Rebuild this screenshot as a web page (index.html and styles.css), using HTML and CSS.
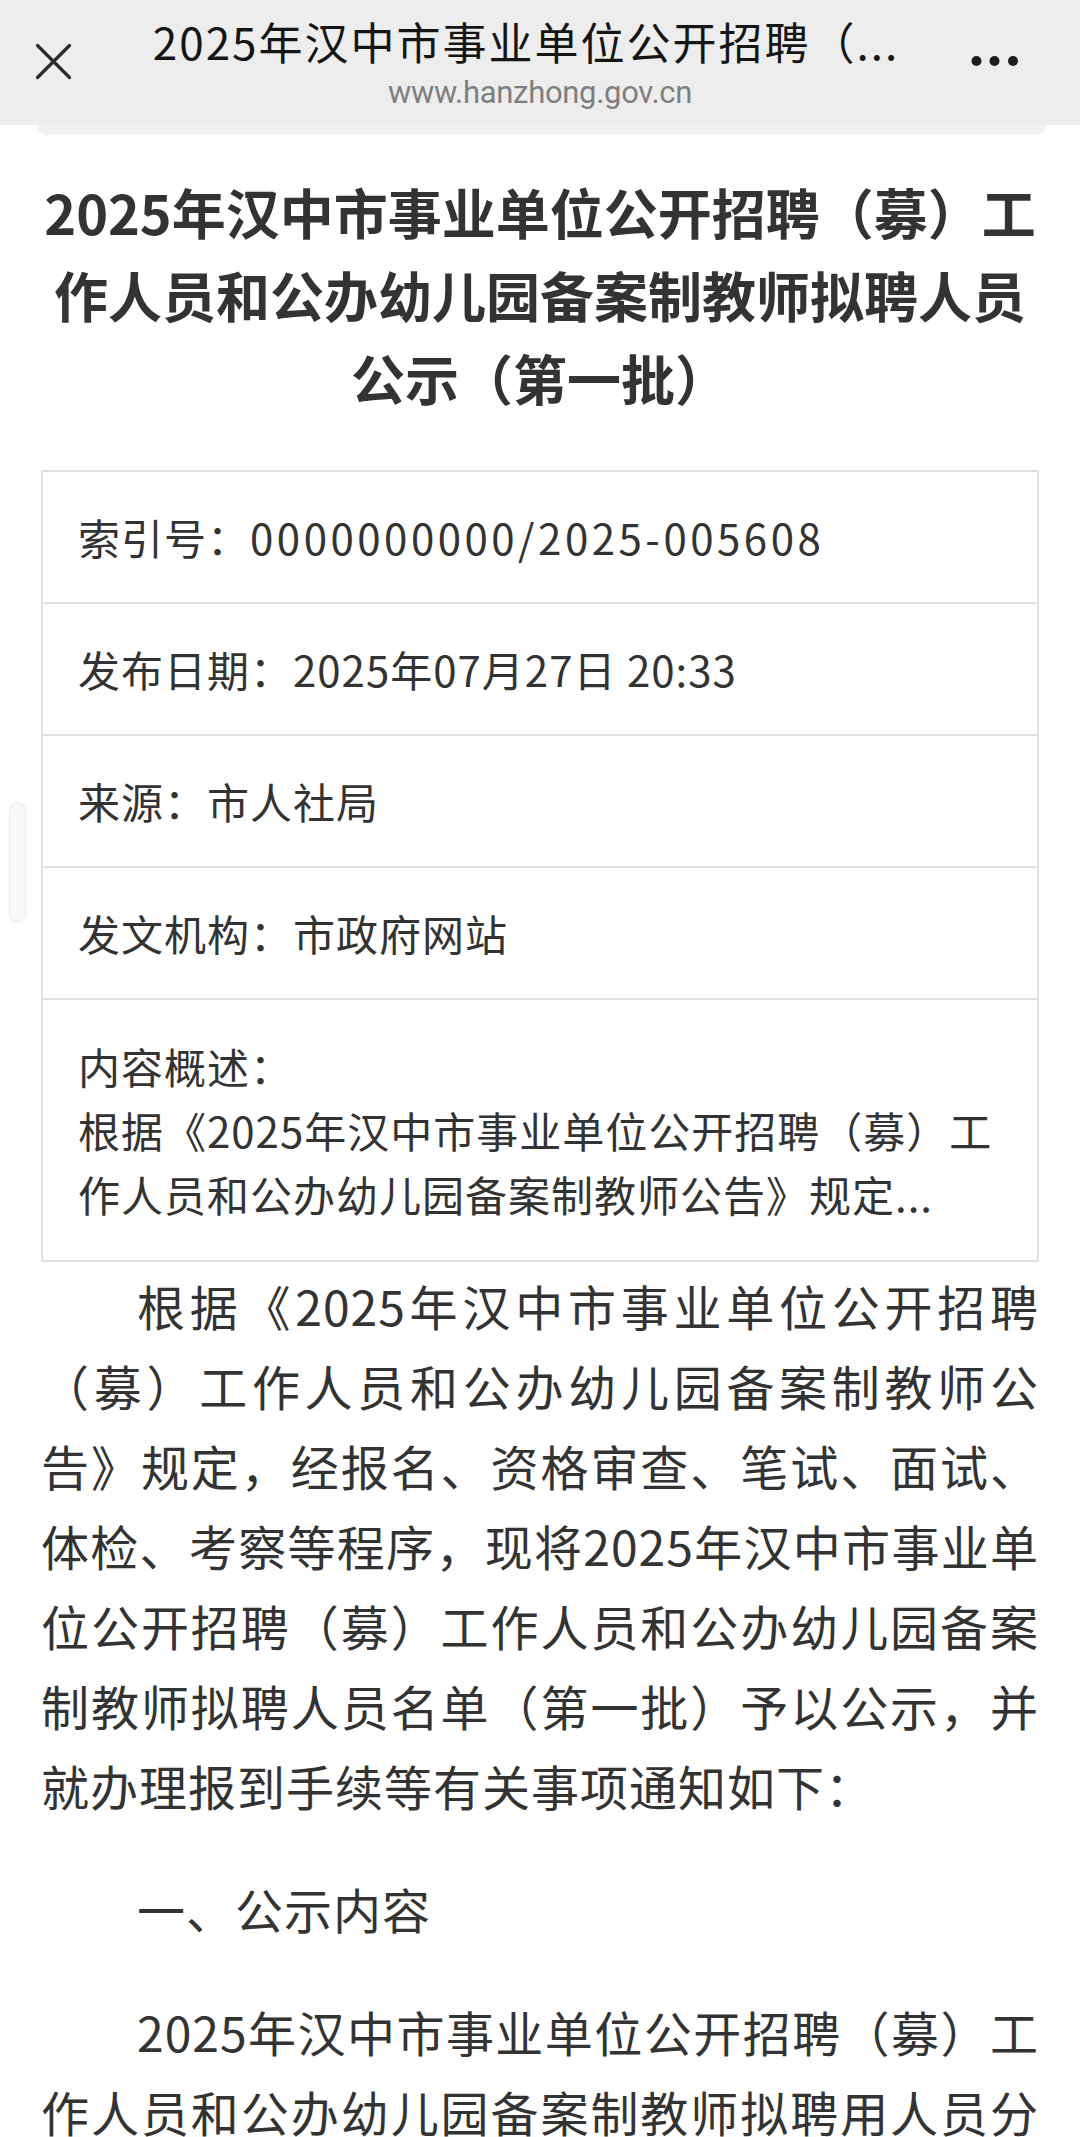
FILE: index.html
```html
<!DOCTYPE html>
<html lang="zh-CN">
<head>
<meta charset="utf-8">
<title>2025年汉中市事业单位公开招聘（募）工作人员和公办幼儿园备案制教师拟聘人员公示（第一批）</title>
<link rel="stylesheet" href="styles.css">
</head>
<body>
<header class="bar">
  <div class="bar-left">
    <svg class="close" viewBox="0 0 37 37" width="37" height="37"><path d="M2.5 2.5 L34.5 34.5 M34.5 2.5 L2.5 34.5" stroke="#2b2b2b" stroke-width="3.2" stroke-linecap="round" fill="none"/></svg>
  </div>
  <div class="bar-center">
    <div class="bar-title">2025年汉中市事业单位公开招聘（...</div>
    <div class="bar-url">www.hanzhong.gov.cn</div>
  </div>
  <div class="bar-right">
    <svg class="more" viewBox="0 0 48 12" width="48" height="12"><circle cx="5.5" cy="6" r="5" fill="#1c1c1c"/><circle cx="23.5" cy="6" r="5" fill="#1c1c1c"/><circle cx="42" cy="6" r="5" fill="#1c1c1c"/></svg>
  </div>
</header>
<div class="bar-tab"></div>
<div class="scroll-thumb"></div>
<main class="article">
  <h1 class="title">2025年汉中市事业单位公开招聘（募）工作人员和公办幼儿园备案制教师拟聘人员公示（第一批）</h1>
  <section class="meta">
    <div class="meta-row">索引号：<span class="num">0000000000/2025-005608</span></div>
    <div class="meta-row">发布日期：2025年07月27日 20:33</div>
    <div class="meta-row">来源：市人社局</div>
    <div class="meta-row">发文机构：市政府网站</div>
    <div class="meta-row meta-summary">
      <div>内容概述：</div>
      <div>根据《2025年汉中市事业单位公开招聘（募）工作人员和公办幼儿园备案制教师公告》规定...</div>
    </div>
  </section>
  <p class="para">根据《2025年汉中市事业单位公开招聘（募）工作人员和公办幼儿园备案制教师公告》规定，经报名、资格审查、笔试、面试、体检、考察等程序，现将2025年汉中市事业单位公开招聘（募）工作人员和公办幼儿园备案制教师拟聘人员名单（第一批）予以公示，并就办理报到手续等有关事项通知如下：</p>
  <p class="para">一、公示内容</p>
  <p class="para">2025年汉中市事业单位公开招聘（募）工作人员和公办幼儿园备案制教师拟聘用人员分类汇总表如下，现予以公示。</p>
</main>
</body>
</html>
```

FILE: styles.css
```css
html, body {
  margin: 0;
  padding: 0;
  background: #ffffff;
}

body {
  font-family: "Noto Sans CJK SC", "Noto Sans", sans-serif;
  color: #333333;
  text-spacing-trim: space-all;
  overflow: hidden;
}

.bar {
  display: grid;
  grid-template-columns: 110px 1fr 110px;
  height: 125px;
  background: #ededed;
}

.bar-left {
  padding: 43px 0 0 35px;
}

.close {
  display: block;
}

.bar-center {
  padding-top: 13px;
  text-align: center;
  min-width: 0;
}

.bar-title {
  font-size: 44px;
  line-height: 56px;
  letter-spacing: 2px;
  color: #151515;
  white-space: nowrap;
  padding-right: 28px;
}

.bar-url {
  margin-top: 4px;
  font-family: Roboto, "Noto Sans", sans-serif;
  font-size: 31px;
  line-height: 40px;
  color: #7f7f7f;
  letter-spacing: -0.3px;
}

.bar-right {
  padding: 55px 0 0 1px;
}

.more {
  display: block;
}

.bar-tab {
  height: 9px;
  margin: 0 34px 0 37px;
  background: #f0f0f0;
  border-radius: 0 0 12px 12px;
  box-shadow: 0 1px 2px rgba(0, 0, 0, 0.04);
}

.scroll-thumb {
  position: absolute;
  left: 9px;
  top: 802px;
  width: 15px;
  height: 118px;
  border-radius: 9px;
  background: #f8f8fa;
  border: 1px solid #ececee;
  box-shadow: 0 0 2px rgba(0, 0, 0, 0.04);
}

.article {
  padding: 0 41px;
}

.title {
  margin: 36px 0 51px;
  font-size: 54px;
  line-height: 83px;
  font-weight: 700;
  text-align: center;
  color: #333333;
}

.meta {
  border: 2px solid #e0e0e0;
}

.meta-row {
  padding: 33px 35px;
  font-size: 42px;
  line-height: 64px;
  letter-spacing: 1px;
  color: #333333;
  border-bottom: 2px solid #e0e0e0;
}

.num {
  letter-spacing: 3.5px;
}

.meta-row:last-child {
  border-bottom: none;
}

.meta-summary {
  padding-top: 34px;
  padding-bottom: 34px;
}

.para {
  margin: 3px 0 43px;
  font-size: 48px;
  line-height: 80px;
  letter-spacing: 1px;
  text-indent: 2em;
  text-align: justify;
  color: #333333;
}

.para + .para {
  margin-top: 0;
}
```
